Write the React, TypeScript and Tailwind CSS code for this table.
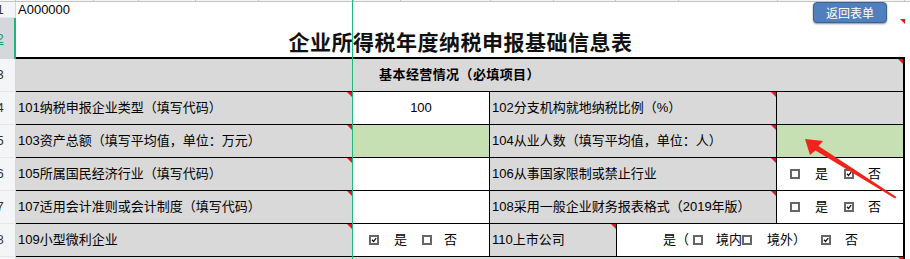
import type { ReactNode } from "react";

// column header ticks left over from the grid above row 1
const colTicks = [78, 45, 57, 63, 95, 47, 90, 63, 62, 63, 99, 127];

function Note() {
  return (
    <span className="absolute top-0 right-0 h-0 w-0 border-t-[5px] border-l-[5px] border-t-[#e8161b] border-l-transparent" />
  );
}

function Box({ checked }: { checked?: boolean }) {
  return (
    <svg width="10" height="10" viewBox="0 0 10 10" className="shrink-0">
      <rect x="1" y="1" width="8" height="8" fill="white" stroke="#666" strokeWidth="2" />
      {checked && (
        <path d="M3 4.8 L4.5 6.4 L7.2 3.2" fill="none" stroke="#111" strokeWidth="1.3" />
      )}
    </svg>
  );
}

function RowHead({ n, active, className = "" }: { n: number; active?: boolean; className?: string }) {
  return (
    <div
      className={`flex w-[16px] shrink-0 items-center overflow-hidden ${
        active
          ? "border-r-2 border-[#1fb57a] bg-[#d4d8dd] text-[#1a9a62] underline"
          : "border-r border-b border-r-[#d6d6d6] border-b-[#e6e6e6] bg-[#f4f5f7] text-[#333]"
      } ${className}`}
    >
      <div className="-ml-[14px] w-[28px] shrink-0 text-center text-[13px]">{n}</div>
    </div>
  );
}

function Label({ w, children, note = true }: { w: string; children: ReactNode; note?: boolean }) {
  return (
    <div className={`relative flex shrink-0 items-center border-r border-b border-black bg-[#d9d9d9] pl-[2px] text-[13px] ${w}`}>
      {children}
      {note && <Note />}
    </div>
  );
}

function Value({ w, green, children, className = "" }: { w: string; green?: boolean; children?: ReactNode; className?: string }) {
  return (
    <div
      className={`flex shrink-0 items-center border-b border-black text-[13px] ${
        green ? "bg-[#c6e0b4]" : "bg-white"
      } ${w} ${className}`}
    >
      {children}
    </div>
  );
}

function YesNo({ yes }: { yes?: boolean }) {
  return (
    <>
      <Box checked={yes} />
      <span className="ml-[15px]">是</span>
      <span className="ml-[16px] flex">
        <Box checked={!yes} />
      </span>
      <span className="ml-[14px]">否</span>
    </>
  );
}

export default function App() {
  return (
    <div className="relative h-[259px] w-[910px] overflow-hidden bg-white font-['Liberation_Sans','Noto_Sans_CJK_SC',sans-serif] text-black">
      {/* column header edge */}
      <div className="flex h-[2px] border-b border-[#c4c4c4] bg-[#f4f5f7]">
        <span className="w-[16px] shrink-0 border-r border-[#c4c4c4]" />
        {colTicks.map((w, i) => (
          <span key={i} className="shrink-0 border-r border-[#c4c4c4]" style={{ width: w }} />
        ))}
      </div>

      {/* row 1 */}
      <div className="flex h-[16px]">
        <RowHead n={1} />
        <div className="flex items-center pl-[2px] text-[13px]">A000000</div>
      </div>

      {/* row 2: title */}
      <div className="flex h-[41px]">
        <RowHead n={2} active />
        <div className="relative flex w-[889px] items-end justify-center border-b-2 border-black pb-[4px]">
          <span className="text-[21px] leading-none font-bold tracking-[0.5px] text-[#111]">
            企业所得税年度纳税申报基础信息表
          </span>
          <span className="absolute top-[1px] right-0">
            <Note />
          </span>
        </div>
      </div>

      {/* row 3: section header */}
      <div className="flex h-[33px]">
        <RowHead n={3} />
        <div className="relative flex w-[889px] items-center justify-center border-r-2 border-b border-black bg-[#d9d9d9] text-[13px] font-bold tracking-[0.4px]">
          基本经营情况（必填项目）
          <Note />
        </div>
      </div>

      {/* row 4 */}
      <div className="flex h-[33px]">
        <RowHead n={4} />
        <Label w="w-[337px]">101纳税申报企业类型（填写代码）</Label>
        <Value w="w-[137px] border-r justify-center">100</Value>
        <Label w="w-[287px]">102分支机构就地纳税比例（%）</Label>
        <Value w="w-[128px] border-r-2" className="bg-[#d9d9d9]!" />
      </div>

      {/* row 5 */}
      <div className="flex h-[33px]">
        <RowHead n={5} />
        <Label w="w-[337px]">103资产总额（填写平均值，单位：万元）</Label>
        <Value w="w-[137px] border-r" green />
        <Label w="w-[287px]">104从业人数（填写平均值，单位：人）</Label>
        <Value w="w-[128px] border-r-2" green />
      </div>

      {/* row 6 */}
      <div className="flex h-[33px]">
        <RowHead n={6} />
        <Label w="w-[337px]">105所属国民经济行业（填写代码）</Label>
        <Value w="w-[137px] border-r" />
        <Label w="w-[287px]">106从事国家限制或禁止行业</Label>
        <Value w="w-[128px] border-r-2 pl-[13px]">
          <YesNo />
        </Value>
      </div>

      {/* row 7 */}
      <div className="flex h-[33px]">
        <RowHead n={7} />
        <Label w="w-[337px]">107适用会计准则或会计制度（填写代码）</Label>
        <Value w="w-[137px] border-r" />
        <Label w="w-[287px]">108采用一般企业财务报表格式（2019年版）</Label>
        <Value w="w-[128px] border-r-2 pl-[13px]">
          <YesNo />
        </Value>
      </div>

      {/* row 8 */}
      <div className="flex h-[33px]">
        <RowHead n={8} />
        <Label w="w-[337px]">109小型微利企业</Label>
        <Value w="w-[137px] border-r pl-[16px]">
          <Box checked />
          <span className="ml-[15px]">是</span>
          <span className="ml-[15px] flex">
            <Box />
          </span>
          <span className="ml-[12px]">否</span>
        </Value>
        <Label w="w-[127px]">110上市公司</Label>
        <Value w="w-[288px] border-r-2 pl-[46px]">
          <span>是（</span>
          <span className="ml-[4px] flex">
            <Box />
          </span>
          <span className="ml-[13px]">境内</span>
          <Box />
          <span className="ml-[15px]">境外）</span>
          <span className="ml-[15px] flex">
            <Box checked />
          </span>
          <span className="ml-[14px]">否</span>
        </Value>
      </div>

      {/* row 9, mostly below the fold */}
      <div className="flex h-[33px]">
        <RowHead n={9} />
        <div className="relative w-[889px] border-r-2 border-black bg-[#d9d9d9]">
          <Note />
        </div>
      </div>

      {/* frozen pane divider */}
      <div className="pointer-events-none absolute top-0 bottom-0 left-[352px] w-px bg-[#22b87c]" />

      {/* floating button */}
      <button className="absolute top-[2px] left-[813px] flex h-[21px] w-[74px] items-center justify-center rounded-[4px] border border-[#3a6293] bg-[#4f7fbd] text-[12px] text-white shadow-[0_1px_2px_rgba(0,0,0,0.45)] font-['Noto_Sans_CJK_SC',sans-serif]">
        返回表单
      </button>

      {/* red callout arrow */}
      <svg className="pointer-events-none absolute top-0 left-0" width="910" height="259">
        <polygon
          points="805,139 823,141 818.5,146 896.5,197 895,198.5 815.5,150.5 810,155"
          fill="#f2231c"
        />
      </svg>
    </div>
  );
}
